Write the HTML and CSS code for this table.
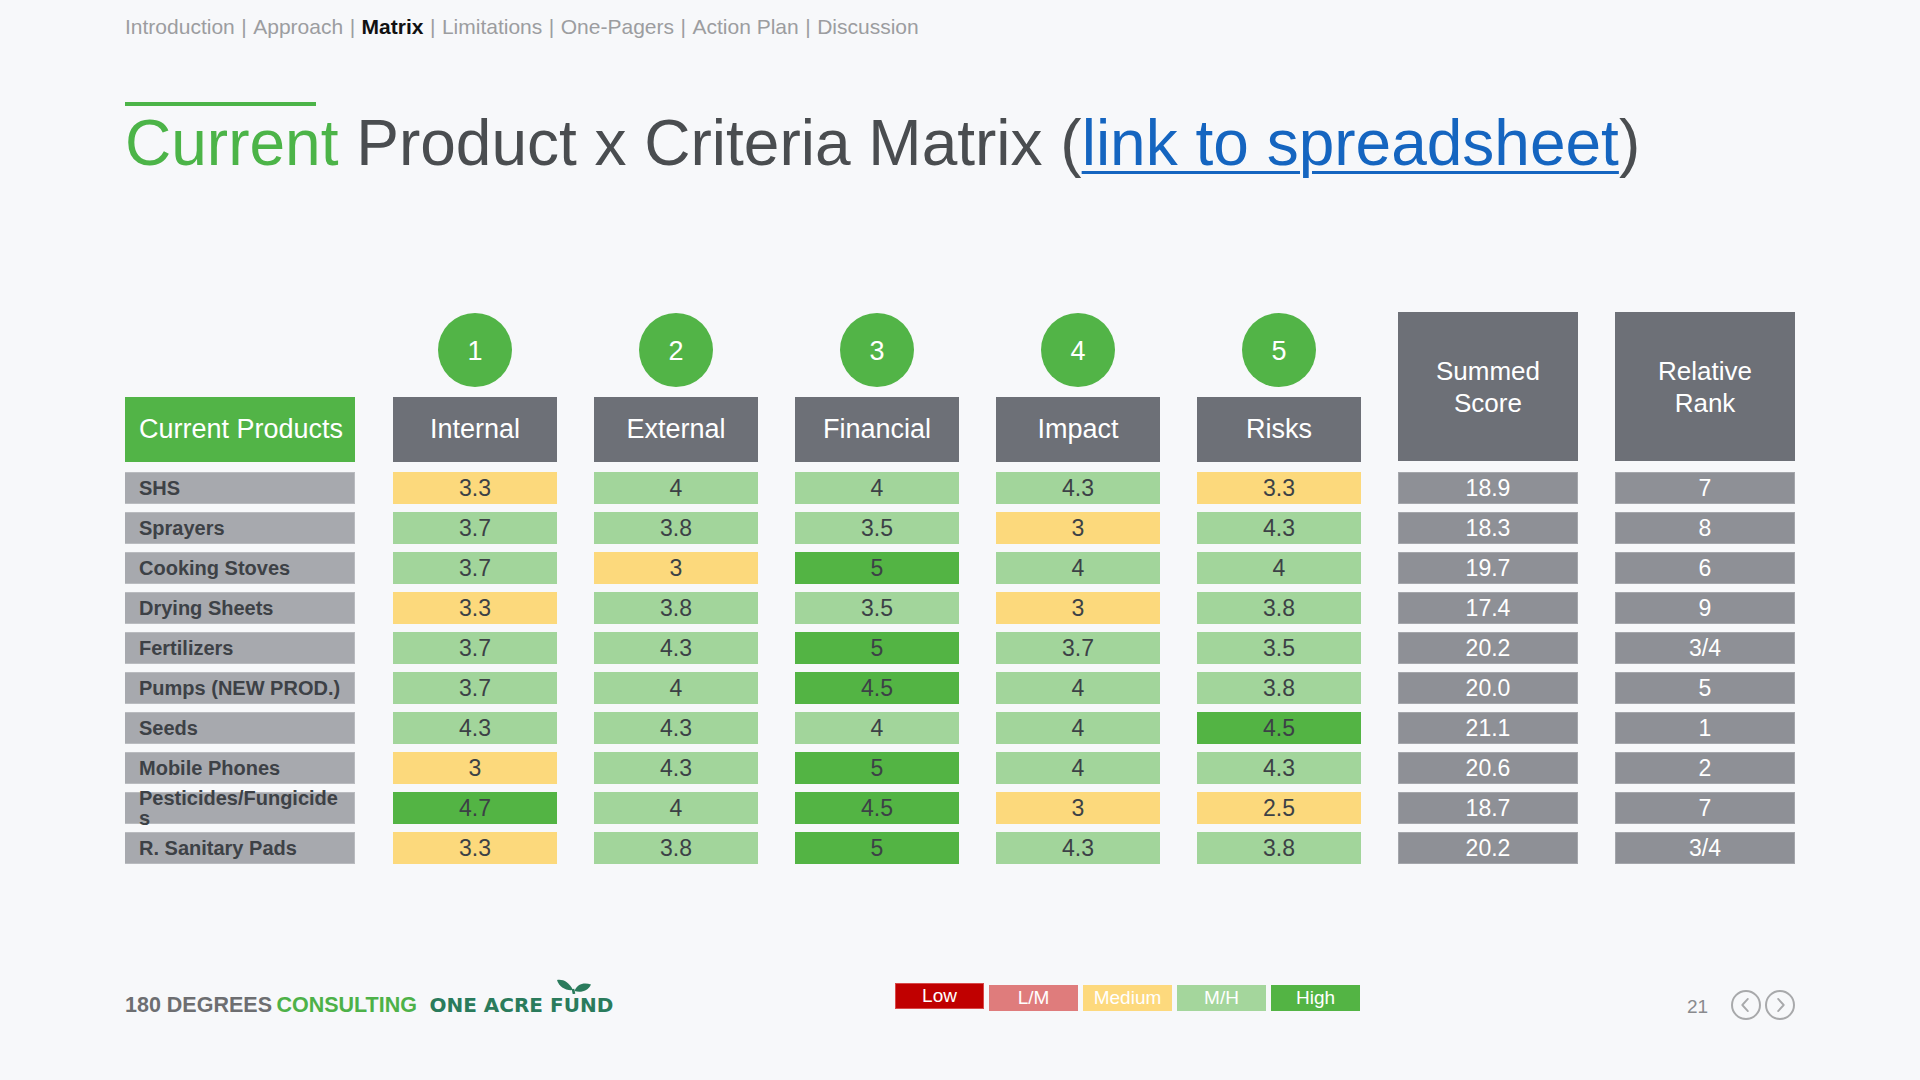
FILE: index.html
```html
<!DOCTYPE html>
<html lang="en">
<head>
<meta charset="utf-8">
<title>Current Product x Criteria Matrix</title>
<link rel="stylesheet" href="styles.css">
</head>
<body>
<div class="slide">
  <nav class="nav">
    <span>Introduction</span><span class="sep">|</span><span>Approach</span><span class="sep">|</span><span class="active">Matrix</span><span class="sep">|</span><span>Limitations</span><span class="sep">|</span><span>One-Pagers</span><span class="sep">|</span><span>Action Plan</span><span class="sep">|</span><span>Discussion</span>
  </nav>
  <div class="title-bar"></div>
  <h1 class="title"><span class="green">Current</span> Product x Criteria Matrix (<a class="link" href="#">link to spreadsheet</a>)</h1>

  <div class="matrix">
    <div class="blank"></div>
    <div class="circle">1</div>
    <div class="circle">2</div>
    <div class="circle">3</div>
    <div class="circle">4</div>
    <div class="circle">5</div>
    <div class="tall-head">Summed<br>Score</div>
    <div class="tall-head">Relative<br>Rank</div>

    <div class="head head-green">Current Products</div>
    <div class="head">Internal</div>
    <div class="head">External</div>
    <div class="head">Financial</div>
    <div class="head">Impact</div>
    <div class="head">Risks</div>

    <div class="label">SHS</div>
    <div class="cell y">3.3</div><div class="cell lg">4</div><div class="cell lg">4</div><div class="cell lg">4.3</div><div class="cell y">3.3</div>
    <div class="sum">18.9</div><div class="sum">7</div>

    <div class="label">Sprayers</div>
    <div class="cell lg">3.7</div><div class="cell lg">3.8</div><div class="cell lg">3.5</div><div class="cell y">3</div><div class="cell lg">4.3</div>
    <div class="sum">18.3</div><div class="sum">8</div>

    <div class="label">Cooking Stoves</div>
    <div class="cell lg">3.7</div><div class="cell y">3</div><div class="cell g">5</div><div class="cell lg">4</div><div class="cell lg">4</div>
    <div class="sum">19.7</div><div class="sum">6</div>

    <div class="label">Drying Sheets</div>
    <div class="cell y">3.3</div><div class="cell lg">3.8</div><div class="cell lg">3.5</div><div class="cell y">3</div><div class="cell lg">3.8</div>
    <div class="sum">17.4</div><div class="sum">9</div>

    <div class="label">Fertilizers</div>
    <div class="cell lg">3.7</div><div class="cell lg">4.3</div><div class="cell g">5</div><div class="cell lg">3.7</div><div class="cell lg">3.5</div>
    <div class="sum">20.2</div><div class="sum">3/4</div>

    <div class="label">Pumps (NEW PROD.)</div>
    <div class="cell lg">3.7</div><div class="cell lg">4</div><div class="cell g">4.5</div><div class="cell lg">4</div><div class="cell lg">3.8</div>
    <div class="sum">20.0</div><div class="sum">5</div>

    <div class="label">Seeds</div>
    <div class="cell lg">4.3</div><div class="cell lg">4.3</div><div class="cell lg">4</div><div class="cell lg">4</div><div class="cell g">4.5</div>
    <div class="sum">21.1</div><div class="sum">1</div>

    <div class="label">Mobile Phones</div>
    <div class="cell y">3</div><div class="cell lg">4.3</div><div class="cell g">5</div><div class="cell lg">4</div><div class="cell lg">4.3</div>
    <div class="sum">20.6</div><div class="sum">2</div>

    <div class="label">Pesticides/Fungicides</div>
    <div class="cell g">4.7</div><div class="cell lg">4</div><div class="cell g">4.5</div><div class="cell y">3</div><div class="cell y">2.5</div>
    <div class="sum">18.7</div><div class="sum">7</div>

    <div class="label">R. Sanitary Pads</div>
    <div class="cell y">3.3</div><div class="cell lg">3.8</div><div class="cell g">5</div><div class="cell lg">4.3</div><div class="cell lg">3.8</div>
    <div class="sum">20.2</div><div class="sum">3/4</div>
  </div>

  <footer class="footer">
    <div class="brand"><span class="b-gray">180 DEGREES</span> <span class="b-green">CONSULTING</span> <span class="oaf">ONE ACRE F<span class="oaf-u">U<svg class="sprout" viewBox="0 0 34 15" aria-hidden="true"><path d="M16 11 C12 3 6 0 0 1 C2 8 9 12 16 11 Z" fill="#2a7b5c"/><path d="M17.5 12 C20 5 27 3 34 5.5 C31 12 24 14 17.5 12 Z" fill="#2a7b5c"/><path d="M16 10 L17 15" stroke="#2a7b5c" stroke-width="2.6"/></svg></span>ND</span></div>
    <div class="legend">
      <div class="key low">Low</div>
      <div class="key lm">L/M</div>
      <div class="key med">Medium</div>
      <div class="key mh">M/H</div>
      <div class="key high">High</div>
    </div>
    <div class="pager">
      <span class="page-num">21</span>
      <span class="arrow"><svg viewBox="0 0 28 28" aria-hidden="true"><path d="M16 7.5 L10 14 L16 20.5" fill="none" stroke="#a8a9ab" stroke-width="2" stroke-linecap="round" stroke-linejoin="round"/></svg></span>
      <span class="arrow"><svg viewBox="0 0 28 28" aria-hidden="true"><path d="M12 7.5 L18 14 L12 20.5" fill="none" stroke="#a8a9ab" stroke-width="2" stroke-linecap="round" stroke-linejoin="round"/></svg></span>
    </div>
  </footer>
</div>
</body>
</html>
```

FILE: styles.css
```css
* { box-sizing: border-box; }
html, body { margin: 0; padding: 0; }
body {
  background: #f7f8fa;
  font-family: "Liberation Sans", Arial, Helvetica, sans-serif;
  color: #4a4d50;
}
.slide {
  width: 1920px;
  height: 1080px;
  padding: 15px 0 0 125px;
  display: flex;
  flex-direction: column;
}

/* nav */
.nav {
  font-size: 21px;
  line-height: 24px;
  color: #9c9da0;
  white-space: nowrap;
}
.nav .sep { margin: 0 6.5px; }
.nav .active { color: #111; font-weight: bold; }

/* title */
.title-bar {
  width: 191px;
  height: 4px;
  background: #4cb448;
  margin-top: 63px;
}
.title {
  margin: 5px 0 0 0;
  font-size: 64px;
  line-height: 64px;
  font-weight: normal;
  color: #4a4d50;
  white-space: nowrap;
}
.title .green { color: #4cb448; }
.title .link {
  color: #1565c0;
  text-decoration: underline;
  text-decoration-thickness: 3px;
  text-underline-offset: 6px;
}

/* matrix */
.matrix {
  margin-top: 138px;
  display: grid;
  grid-template-columns: 231px repeat(5, 164px) 180px 180px;
  grid-template-rows: 76px 67px repeat(10, 32px);
  column-gap: 37px;
  row-gap: 8px;
  width: max-content;
}
.circle {
  justify-self: center;
  align-self: start;
  width: 74px;
  height: 74px;
  border-radius: 50%;
  background: #52b447;
  color: #fff;
  font-size: 27px;
  padding-top: 2px;
  display: flex;
  align-items: center;
  justify-content: center;
}
.tall-head {
  grid-row: span 2;
  align-self: start;
  height: 149px;
  margin-top: -1px;
  background: #6d7077;
  color: #fff;
  font-size: 26px;
  line-height: 32px;
  text-align: center;
  display: flex;
  align-items: center;
  justify-content: center;
}
.head {
  height: 65px;
  align-self: start;
  background: #6d7077;
  color: #fff;
  font-size: 27px;
  display: flex;
  align-items: center;
  justify-content: center;
}
.head-green {
  background: #52b447;
  justify-content: flex-start;
  padding-left: 14px;
  margin-right: 1px;
}
.label {
  background: #a7a9ae;
  color: #3d4146;
  font-weight: bold;
  font-size: 20px;
  line-height: 20px;
  padding: 0 12px 0 14px;
  margin-right: 1px;
  display: flex;
  align-items: center;
  word-break: break-all;
  border: 1px solid #b9bbbf;
  border-left: none;
}
.cell, .sum {
  font-size: 23px;
  display: flex;
  align-items: center;
  justify-content: center;
  color: #3c4146;
}
.cell.y { background: #fcd97c; }
.cell.lg { background: #a2d59b; }
.cell.g { background: #53b444; }
.sum {
  background: #8e9096;
  color: #fff;
  border: 1px solid #a4a6ab;
}

/* footer */
.footer {
  margin-top: auto;
  margin-bottom: 60px;
  height: 40px;
  display: flex;
  align-items: flex-start;
}
.brand {
  width: 770px;
  margin-top: 13px;
  line-height: 24px;
  white-space: nowrap;
}
.b-gray {
  font-weight: bold;
  font-size: 21.5px;
  color: #6d6e71;
}
.b-green {
  font-weight: bold;
  font-size: 21.5px;
  color: #4db148;
}
.oaf {
  margin-left: 8px;
  font-family: "DejaVu Sans", sans-serif;
  font-weight: bold;
  font-size: 20px;
  color: #2a7b5c;
}
.oaf-u { position: relative; }
.sprout {
  position: absolute;
  left: -7px;
  top: -14px;
  width: 34px;
  height: 15px;
}
.legend {
  display: flex;
  gap: 5px;
  align-items: flex-start;
  margin-top: 3px;
}
.key {
  width: 89px;
  height: 26px;
  color: #fff;
  font-size: 19px;
  display: flex;
  align-items: center;
  justify-content: center;
  margin-top: 2px;
}
.key.low { background: #c00000; margin-top: 0; border: 1px solid #d84a4a; }
.key.lm { background: #df7c7c; }
.key.med { background: #fdd97d; }
.key.mh { background: #a4d69c; }
.key.high { background: #53b444; }
.pager {
  margin-left: 327px;
  margin-top: 10px;
  height: 30px;
  display: flex;
  align-items: center;
}
.page-num {
  font-size: 19px;
  color: #8a8b8e;
  margin-right: 23px;
  padding-top: 3px;
}
.arrow {
  width: 30px;
  height: 30px;
  border: 2px solid #a8a9ab;
  border-radius: 50%;
  margin-right: 4px;
  display: flex;
  align-items: center;
  justify-content: center;
}
.arrow svg { width: 26px; height: 26px; }
```
